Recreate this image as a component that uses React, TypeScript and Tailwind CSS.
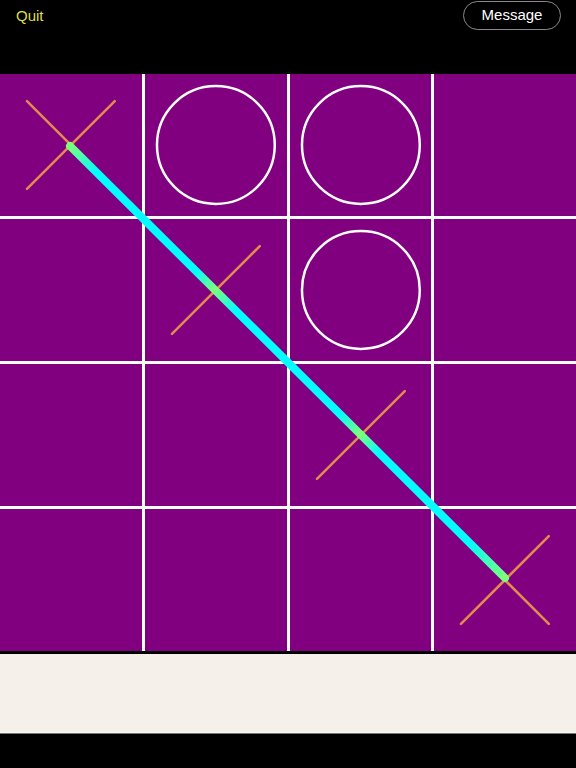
import React from 'react';

type Mark = 'X' | 'O' | null;

const board: Mark[][] = [
  ['X', 'O', 'O', null],
  [null, 'X', 'O', null],
  [null, null, 'X', null],
  [null, null, null, 'X'],
];

const Cross = () => (
  <svg viewBox="0 0 142 142" className="w-full h-full">
    <line x1="27" y1="27" x2="115" y2="115" stroke="#e38b4f" strokeWidth="2.5" strokeLinecap="round" />
    <line x1="115" y1="27" x2="27" y2="115" stroke="#e38b4f" strokeWidth="2.5" strokeLinecap="round" />
  </svg>
);

const Nought = () => (
  <svg viewBox="0 0 142 142" className="w-full h-full">
    <circle cx="71" cy="71" r="59" fill="none" stroke="#ffffff" strokeWidth="2.5" />
  </svg>
);

export default function App() {
  return (
    <div className="w-[576px] h-[768px] bg-black flex flex-col" style={{ fontFamily: '"Liberation Sans", Arial, sans-serif' }}>
      {/* top bar */}
      <div className="h-[74px] flex items-start justify-between pl-4 pr-[15px]">
        <button className="text-[#dede4a] text-[15px] mt-[5px]">Quit</button>
        <button className="mt-[1px] h-[29px] w-[98px] rounded-full border border-[#8a8a8a] text-white text-[15px] flex items-center justify-center">
          Message
        </button>
      </div>

      {/* board */}
      <div className="relative h-[577px]">
        <div className="grid grid-cols-4 grid-rows-4 gap-[3px] bg-white h-full">
          {board.flat().map((m, i) => (
            <div key={i} className="bg-[#800080]">
              {m === 'X' && <Cross />}
              {m === 'O' && <Nought />}
            </div>
          ))}
        </div>
        <svg viewBox="0 0 576 577" className="absolute inset-0 w-full h-full pointer-events-none">
          <defs>
            <linearGradient id="win" gradientUnits="userSpaceOnUse" x1="70" y1="72" x2="505" y2="504">
              <stop offset="0" stopColor="#7dff7a" />
              <stop offset="0.06" stopColor="#00ffff" />
              <stop offset="0.29" stopColor="#00ffff" />
              <stop offset="0.333" stopColor="#7dff7a" />
              <stop offset="0.38" stopColor="#00ffff" />
              <stop offset="0.62" stopColor="#00ffff" />
              <stop offset="0.667" stopColor="#7dff7a" />
              <stop offset="0.71" stopColor="#00ffff" />
              <stop offset="0.92" stopColor="#00ffff" />
              <stop offset="1" stopColor="#7dff7a" />
            </linearGradient>
          </defs>
          <line x1="70" y1="72" x2="505" y2="504" stroke="url(#win)" strokeWidth="8" strokeLinecap="round" />
        </svg>
      </div>

      {/* bottom panel */}
      <div className="h-[3px] bg-black" />
      <div className="h-[79px] bg-[#f5f0ea] border-b border-[#fbf8f3]" />
      <div className="h-[1px] bg-[#7a7470]" />
      <div className="flex-1 bg-black" />
    </div>
  );
}
